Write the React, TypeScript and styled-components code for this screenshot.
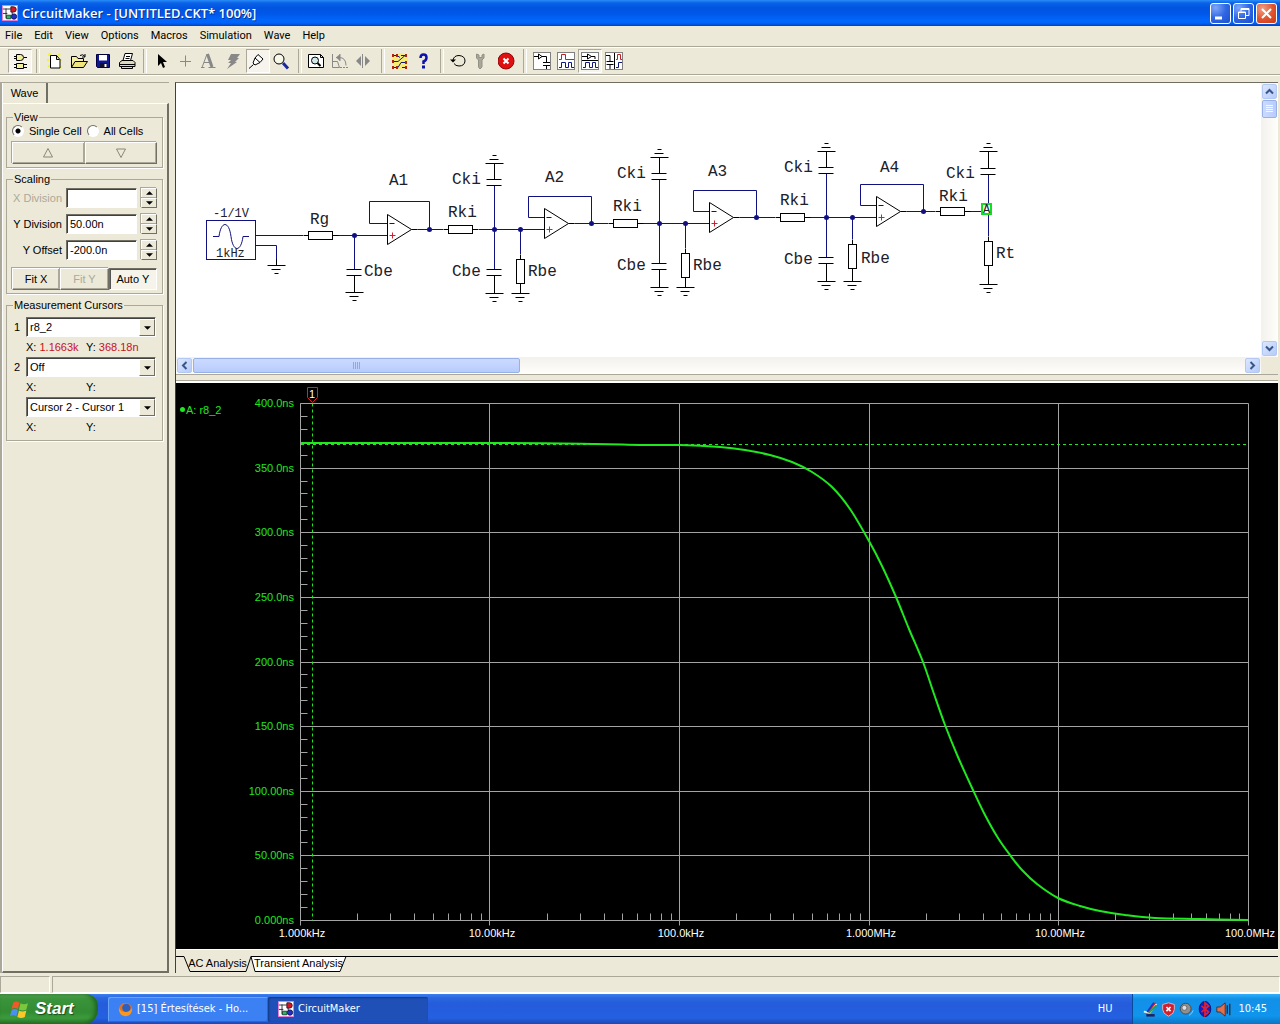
import React, { useState } from "react";
import styled, { createGlobalStyle, css } from "styled-components";

const face = "#ece9d8";
const shade = "#aca899";
const dark = "#716f64";
const ui = `"Liberation Sans", Arial, sans-serif`;
const tahoma = `"DejaVu Sans Condensed", "DejaVu Sans", Tahoma, sans-serif`;
const mono = `"Liberation Mono", "Courier New", monospace`;

const GlobalStyle = createGlobalStyle`
  * { box-sizing: border-box; }
  body { margin: 0; background: ${face}; font: 11px/12px ${ui}; color: #000; }
  button, input, select { font: inherit; color: inherit; margin: 0; padding: 0; }
`;

const Desktop = styled.div`
  display: flex;
  flex-direction: column;
  height: 100vh;
  min-height: 700px;
  overflow: hidden;
`;

/* ---------- title bar ---------- */

const TitleBar = styled.header`
  display: flex;
  align-items: center;
  gap: 4px;
  height: 26px;
  flex: none;
  padding: 0 3px 0 2px;
  background: linear-gradient(#2a8cf8 0, #0a62e8 3px, #0054e0 8px, #0058ea 14px, #0066fc 20px, #0064f8 23px, #0040c4 26px);
`;

const Title = styled.h1`
  flex: 1;
  margin: 0;
  font: 600 13px/18px "Open Sans", "Noto Sans", sans-serif;
  color: #fff;
  text-shadow: 1px 1px 0 #0a2f90;
  white-space: nowrap;
`;

const WindowButtons = styled.div`
  display: flex;
  gap: 2px;
`;

const WindowButton = styled.button<{ $close?: boolean }>`
  width: 21px;
  height: 21px;
  border: 1px solid #fff;
  border-radius: 3px;
  background: ${(p) =>
    p.$close
      ? "radial-gradient(circle at 30% 25%, #f0a088, #e0512c 55%, #c83c14)"
      : "radial-gradient(circle at 25% 20%, #7fa8f8, #2f66e4 50%, #1c50cc)"};
  svg { display: block; }
`;

/* ---------- menu and toolbar ---------- */

const MenuBar = styled.nav`
  display: flex;
  gap: 12px;
  flex: none;
  height: 22px;
  padding: 0 5px;
  border-bottom: 1px solid #fff;
  box-shadow: inset 0 -1px ${shade};
`;

const MenuItem = styled.button`
  height: 20px;
  border: 0;
  background: none;
  font: 11px/18px Roboto, ${tahoma};
`;

const Toolbar = styled.div`
  display: flex;
  align-items: center;
  flex: none;
  height: 28px;
  padding: 0 8px 2px;
  border-bottom: 1px solid #fff;
  box-shadow: inset 0 -1px ${shade};
`;

const Separator = styled.span`
  display: flex;
  justify-content: center;
  width: 11px;
  height: 24px;
  &::before {
    content: "";
    width: 2px;
    border-left: 1px solid ${shade};
    border-right: 1px solid #fff;
  }
`;

const ToolButton = styled.button<{ $on?: boolean }>`
  display: flex;
  align-items: center;
  justify-content: center;
  width: 24px;
  height: 24px;
  border: 1px solid transparent;
  background: none;
  ${(p) =>
    p.$on &&
    css`
      border-color: ${shade} #fff #fff ${shade};
      background: #f6f4ec;
    `}
`;

/* ---------- workspace ---------- */

const Workspace = styled.main`
  display: flex;
  flex: 1;
  min-height: 0;
  gap: 6px;
  padding: 6px 2px 3px 0;
`;

const SidePanel = styled.aside`
  display: flex;
  flex-direction: column;
  flex: none;
  width: 169px;
  border-top: 1px solid ${shade};
  border-left: 2px solid ${shade};
`;

const SideTab = styled.button`
  align-self: flex-start;
  width: 46px;
  height: 20px;
  border: 0;
  border-left: 1px solid #fff;
  border-right: 2px solid ${dark};
  background: ${face};
  font-family: ${ui};
`;

const SideBody = styled.div`
  display: flex;
  flex-direction: column;
  gap: 5px;
  flex: 1;
  padding: 7px 4px 0 3px;
  border: 1px solid #fff;
  border-right: 2px solid ${dark};
  border-bottom: 2px solid ${dark};
`;

const Group = styled.fieldset`
  margin: 0;
  min-width: 0;
  padding: 0 5px 3px;
  border: 1px solid ${shade};
  box-shadow: 1px 1px #fff;
  legend { margin-left: 1px; padding: 0 1px; line-height: 12px; background: ${face}; }
`;

const RadioRow = styled.div`
  display: flex;
  align-items: center;
  gap: 5px;
  height: 16px;
  margin-bottom: 3px;
`;

const RadioLabel = styled.label`
  display: flex;
  align-items: center;
  gap: 5px;
  white-space: nowrap;
`;

const Radio = styled.input`
  appearance: none;
  width: 12px;
  height: 12px;
  border: 1px solid;
  border-color: ${dark} #fff #fff ${dark};
  border-radius: 50%;
  background: #fff;
  &:checked { background: radial-gradient(circle, #000 2px, #fff 3px); }
`;

const ButtonRow = styled.div`
  display: flex;
`;

const PushButton = styled.button<{ $down?: boolean }>`
  flex: 1;
  height: 22px;
  border: 1px solid;
  border-color: ${(p) => (p.$down ? `${dark} #fff #fff ${dark}` : `#fff ${dark} ${dark} #fff`)};
  background: ${(p) => (p.$down ? "#f5f3ea" : face)};
  box-shadow: ${(p) => (p.$down ? "inset 1px 1px #555" : `inset -1px -1px ${shade}, -1px -1px ${shade}`)};
  &:disabled { color: ${shade}; }
  svg { display: block; margin: 0 auto; }
`;

const ScalingRows = styled.div`
  display: grid;
  gap: 6px;
  padding: 3px 0 8px;
`;

const ScalingRow = styled.div<{ $off?: boolean }>`
  display: grid;
  grid-template-columns: 50px 71px 16px;
  column-gap: 4px;
  height: 20px;
  label {
    align-self: center;
    text-align: right;
    white-space: nowrap;
    color: ${(p) => (p.$off ? shade : "#000")};
  }
`;

const sunken = css`
  border: 1px solid;
  border-color: ${dark} #fff #fff ${dark};
  box-shadow: inset 1px 1px #404040;
  background: #fff;
`;

const TextBox = styled.input`
  ${sunken}
  min-width: 0;
  width: 100%;
  padding-left: 3px;
  border-radius: 0;
`;

const Spinner = styled.span`
  display: grid;
  grid-template-rows: 1fr 1fr;
`;

const SpinButton = styled.button`
  display: flex;
  align-items: center;
  justify-content: center;
  border: 1px solid;
  border-color: #fff ${dark} ${dark} #fff;
  box-shadow: -1px -1px ${shade};
  background: ${face};
`;

const CursorGrid = styled.div`
  display: grid;
  grid-template-columns: 12px 130px;
  grid-auto-rows: 20px;
  align-items: center;
  padding: 6px 0 0 2px;
`;

const SelectBox = styled.span`
  position: relative;
  display: block;
  grid-column: 2;
`;

const Select = styled.select`
  ${sunken}
  appearance: none;
  display: block;
  width: 100%;
  height: 20px;
  padding-left: 3px;
  border-radius: 0;
`;

const SelectArrow = styled.span`
  position: absolute;
  top: 2px;
  right: 1px;
  display: flex;
  align-items: center;
  justify-content: center;
  width: 16px;
  height: 17px;
  border: 1px solid;
  border-color: #fff ${dark} ${dark} #fff;
  background: ${face};
  pointer-events: none;
`;

const Readout = styled.div`
  grid-column: 2;
  display: grid;
  grid-template-columns: 60px 1fr;
  span { white-space: nowrap; }
  output { color: #c8101c; }
`;

const Documents = styled.section`
  display: flex;
  flex-direction: column;
  flex: 1;
  min-width: 0;
  border-top: 1px solid ${dark};
  border-left: 1px solid #404040;
`;

const SchematicPane = styled.div`
  display: grid;
  grid-template-columns: minmax(0, 1fr) 17px;
  grid-template-rows: 274px 17px;
  flex: none;
  border-bottom: 1px solid ${shade};
`;

const SheetView = styled.div`
  overflow: hidden;
  background: #fff;
  svg { display: block; }
`;

const ScrollTrack = styled.div<{ $row?: boolean }>`
  display: flex;
  flex-direction: ${(p) => (p.$row ? "row" : "column")};
  gap: 1px;
  padding: 1px;
  background: ${(p) => (p.$row ? "linear-gradient(#f3f1ec, #fefefb)" : "linear-gradient(90deg, #f3f1ec, #fefefb)")};
`;

const ScrollButton = styled.button`
  display: flex;
  align-items: center;
  justify-content: center;
  flex: none;
  width: 15px;
  height: 15px;
  border: 1px solid #b4c8f4;
  border-radius: 2px;
  background: linear-gradient(135deg, #dce7ff, #b6cbf8);
`;

const ScrollThumb = styled.span<{ $row?: boolean }>`
  display: flex;
  align-items: center;
  justify-content: center;
  flex: none;
  width: ${(p) => (p.$row ? "30.2%" : "15px")};
  height: ${(p) => (p.$row ? "15px" : "18px")};
  border: 1px solid #98b0e8;
  border-radius: 2px;
  background: ${(p) => (p.$row ? "linear-gradient(#cbdaff, #b8ccfb)" : "linear-gradient(90deg, #cbdaff, #b8ccfb)")};
`;

const ScrollGap = styled.span`
  flex: 1;
`;

const Splitter = styled.div`
  flex: none;
  height: 8px;
  border-bottom: 2px solid #fff;
  box-shadow: inset 0 -1px ${shade};
`;

const Graph = styled.svg`
  flex: 1 1 0;
  min-height: 0;
  width: 100%;
  background: #000;
`;

const SheetTabs = styled.div`
  display: flex;
  flex: none;
  height: 24px;
  padding-top: 6px;
  border-top: 1px solid #fff;
  &::before { content: ""; width: 8px; border-top: 1px solid #000; }
  &::after { content: ""; flex: 1; border-top: 1px solid #000; }
`;

const SheetTab = styled.button<{ $w: number }>`
  position: relative;
  width: ${(p) => p.$w}px;
  height: 16px;
  padding-bottom: 2px;
  border: 0;
  background: none;
  white-space: nowrap;
  svg { position: absolute; left: 0; top: 0; width: 100%; height: 100%; overflow: visible; }
  span { position: relative; }
`;

const StatusBar = styled.footer`
  display: grid;
  grid-template-columns: 50px 1fr;
  gap: 2px;
  flex: none;
  height: 18px;
  border-bottom: 1px solid #fff;
`;

const StatusCell = styled.span`
  border: 1px solid;
  border-color: ${shade} #fff #fff ${shade};
`;

/* ---------- taskbar ---------- */

const Taskbar = styled.div`
  display: flex;
  flex: none;
  height: 30px;
  background: linear-gradient(#3a80f0 0, #2a66de 4px, #245cdc 10px, #2460e0 24px, #1c48b4 30px);
  color: #fff;
  font: 11px/14px ${tahoma};
`;

const StartButton = styled.button`
  display: flex;
  align-items: center;
  gap: 6px;
  width: 98px;
  margin-right: 10px;
  padding: 0 0 0 10px;
  border: 0;
  border-radius: 0 12px 14px 0;
  background: linear-gradient(#5aa85a 0, #3a943a 5px, #338c33 18px, #3b9b3b 24px, #2a722a 30px);
  box-shadow: inset -3px 0 4px #1f641f;
  font: italic bold 17px/24px "Liberation Sans", Arial, sans-serif;
  color: #fff;
  text-shadow: 1px 1px 1px #1a4a1a;
`;

const TaskButton = styled.button<{ $active?: boolean }>`
  display: flex;
  align-items: center;
  gap: 4px;
  width: 160px;
  height: 25px;
  align-self: center;
  padding: 0 10px;
  border: 0;
  border-radius: 2px;
  background: ${(p) => (p.$active ? "#1e50b8" : "#3c81f3")};
  box-shadow: ${(p) => (p.$active ? "inset 1px 1px 2px #123880" : "inset 1px 1px #6aa4f8, inset -1px -1px #2a66d0")};
  white-space: nowrap;
`;

const Language = styled.span`
  margin: auto 20px auto auto;
`;

const Tray = styled.div`
  display: flex;
  align-items: center;
  gap: 3px;
  padding: 0 13px 0 10px;
  border-left: 1px solid #0a4a9c;
  background: linear-gradient(#2fb0f8 0, #1290e8 5px, #1094ec 22px, #0c74c4 30px);
  time { margin-left: 4px; }
`;

/* ---------- icons ---------- */

const Icon = ({ children, size = 18 }: { children: React.ReactNode; size?: number }) => (
  <svg width={size} height={size} viewBox="0 0 18 18" fill="none" stroke="#000" aria-hidden="true">
    {children}
  </svg>
);

const AppIcon = () => (
  <Icon size={16}>
    <rect x="0" y="0" width="18" height="18" fill="#fff" stroke="none" />
    <rect x="0.5" y="0.5" width="17" height="17" stroke="#e070d0" />
    <path d="M1 4.5H11M4.5 4V15M1 9.5H6M11.5 8V12" stroke="#223" />
    <path d="M10 2h3a3 3 0 0 1 0 6h-3z" fill="#d01828" stroke="#401020" />
    <path d="M5 11.5h5v4H5z" fill="#30b860" stroke="#104030" />
    <circle cx="13.5" cy="13" r="3" fill="#2030c8" stroke="#101050" />
  </Icon>
);

const wavePair = "M2 15.5H4.5V10.5H8.5V15.5H11.5V10.5H14.5V15.5H17";
const Frame = () => <rect x="0.5" y="0.5" width="17" height="17" fill="#fff" stroke="#808080" />;

const icons: Record<string, React.ReactNode> = {
  parts: (
    <g fill="#f4f09a">
      <path d="M5.5 2.5h4q3 0 3 3t-3 3h-4zM3 4.5h2M3 6.5h2M13 5.5h3" />
      <path d="M5.5 11.5h7v5h-7zM3 12.5h2M3 15.500h2M13 12.500h3M13 15.500h3" />
    </g>
  ),
  newFile: (
    <>
      <path d="M2 3h2M3 1l2 2M1 8h2M2 15l2-2M14 2l-2 2M14 8h2M13 14l2 2" stroke="#f4f040" strokeWidth="2" />
      <path d="M4.500 3.500h6l3.500 4v8.500h-9.500zM10.500 3.500v4h3" fill="#fff" />
    </>
  ),
  open: (
    <>
      <path d="M1.500 15.500v-11h5l1.500 2h5.500v3" fill="#f6f0a0" />
      <path d="M1.500 15.500 5 9.500h12.500l-4 6z" fill="#f0e680" />
      <path d="M10 3.500q3-2 5 1M15 2v3h-3" />
    </>
  ),
  save: (
    <>
      <path d="M2.500 2.500h13v13h-12l-1-1z" fill="#101890" stroke="#000040" />
      <path d="M5 3h8v5.500H5z" fill="#fff" stroke="none" />
      <path d="M6 11h7v4.500H6z" fill="#101030" stroke="none" />
      <path d="M10.500 12h2v3h-2z" fill="#fff" stroke="none" />
    </>
  ),
  print: (
    <>
      <path d="M5 8.500 7 1.500h7.500l-2 7" fill="#fff" />
      <path d="M8 4.500h4M7.500 6.500h4" />
      <path d="M1.500 10.500 4 8.500h11l2 2v4H1.500zM1.500 12.500H17M3.500 14.500v2h11v-2" fill="#ddd8c0" />
    </>
  ),
  arrow: <path d="M5 2v12l3-3 2 5 2-1-2-5h4z" fill="#000" stroke="none" />,
  plus: <path d="M8.500 3.500v11M3 9.500h11" stroke="#888" />,
  text: (
    <g transform="translate(-3 0)">
      <path d="M9 2 4 15.500M6 10.500h6" stroke="#888" />
      <path d="M9.500 2 14 15" stroke="#888" strokeWidth="3" />
      <path d="M1.500 15.500h5M10.500 15.500h7" stroke="#888" />
    </g>
  ),
  bolt: <path d="M6 2h9l-3 4h2l-4 4h2L2 17l4-6H3l3-3H3z" fill="#888" stroke="none" />,
  probe: (
    <path d="M0 16.500 4.500 12.500M9 2.500l5 4.500-3 3.500-5 2.500-2-2L6 6zM6 6l5 4.500" fill="#fff" />
  ),
  zoom: (
    <>
      <circle cx="6" cy="7" r="5" fill="#f8f8e8" />
      <path d="m10 11 5 5.500" stroke="#1828a0" strokeWidth="3" />
    </>
  ),
  fit: (
    <>
      <path d="M.5 2.500h12l3 3v10H.5zM12.500 2.500v3h3" fill="#fff" />
      <circle cx="7" cy="8.500" r="3.500" fill="#d0e8e8" />
      <path d="m9.500 11 3 3" strokeWidth="2" />
    </>
  ),
  rotate: (
    <g stroke="#888">
      <path d="M.5 2v13.500h7M.5 9.500h5l2 6" />
      <path d="M4 5.500h3q7 0 7 8M8 2v7" />
      <path d="M4 5.500 8 2v7z" fill="#888" stroke="none" />
      <path d="M8 15.500h8" strokeDasharray="2 1" />
    </g>
  ),
  mirror: (
    <g stroke="#888">
      <path d="M6.500 2v14" />
      <path d="M5 4v10L0 9z" fill="#888" stroke="none" />
      <path d="M9 4v10l5-5z" fill="#888" stroke="none" />
    </g>
  ),
  sweep: (
    <>
      <circle cx="9" cy="9" r="8" fill="#f8ec70" stroke="none" />
      <path d="M1 3.500h5l3 2M10 3.500h6M1 9.500h6l7-6M3 15.500h4l3-5h6M11 15.500h5" stroke="#101880" />
      <path d="M2 2v3M2 8v3M2 14v3M15 2v3M15 9v3M15 14v3M6 2v3M6 14v3" stroke="#b02010" strokeWidth="2" />
    </>
  ),
  help: (
    <>
      <path d="M5.500 6q0-3.500 3-3.500t3 3-3 4V12" stroke="#1010b0" strokeWidth="2.500" />
      <path d="M7 13.500h3v3H7z" fill="#1010b0" stroke="none" />
    </>
  ),
  reset: (
    <>
      <path d="M3 8q1-4.500 6-4.500 6 .5 6 5.500-.5 5-6 5-3.500 0-5-2.500" />
      <path d="M0 7.500h6L3 10.500z" fill="#000" stroke="none" />
    </>
  ),
  wrench: (
    <path d="M2.500 2v4l2 2v7l1.500 2 2-2V8l2-2V2L8 3v2.500H5V3z" fill="#aaa79a" stroke="#928f84" />
  ),
  stop: (
    <>
      <circle cx="8" cy="9" r="8" fill="#e01010" stroke="#900808" />
      <path d="m5.500 6.500 5 5M10.500 6.500l-5 5" stroke="#fff" strokeWidth="2" />
    </>
  ),
  circuit: (
    <>
      <Frame />
      <path d="M1 4.500h4M9 4.500h4.500V10M5.500 2v5L9 4.500zM10 10.500h7M10 13.500h7M13.500 14v3" />
    </>
  ),
  waves: (
    <>
      <Frame />
      <path d="M2 7.500h2.500v-5h4v5H17" stroke="#c02020" />
      <path d={wavePair} stroke="#101880" />
    </>
  ),
  splitH: (
    <>
      <Frame />
      <path d="M1 4.500h5M10 4.500h4V7M6.500 2v5l4-2.500zM1 8.500h16" />
      <path d={wavePair} stroke="#101880" />
    </>
  ),
  splitV: (
    <>
      <Frame />
      <path d="M1 3.500h4V9M1.500 9.500h7M1.500 12.500h7M5 13v4M9.500 1v16" />
      <path d="M11 7.500h1.500v-5h3v5H17" stroke="#c02020" />
      <path d="M11 15.500h2.500v-5H17" stroke="#101880" />
    </>
  ),
};

const toolGroups: [string, string, boolean?][][] = [
  [["parts", "Browse parts", true]],
  [["newFile", "New"], ["open", "Open"], ["save", "Save"], ["print", "Print"]],
  [["arrow", "Select"], ["plus", "Wire"], ["text", "Text"], ["bolt", "Delete"], ["probe", "Probe", true], ["zoom", "Zoom"]],
  [["fit", "Fit to window"], ["rotate", "Rotate"], ["mirror", "Mirror"]],
  [["sweep", "Digital mode"], ["help", "Help"]],
  [["reset", "Reset"], ["wrench", "Setup"], ["stop", "Stop"]],
  [["circuit", "Circuit"], ["waves", "Waveforms"], ["splitH", "Split horizontally", true], ["splitV", "Split vertically"]],
];

const Triangle = ({ down, w = 7 }: { down?: boolean; w?: number }) => (
  <svg width={w} height="4" viewBox="0 0 8 4" aria-hidden="true">
    <path d={down ? "M0 0h8L4 4z" : "M0 4h8L4 0z"} />
  </svg>
);

const HollowTriangle = ({ down }: { down?: boolean }) => (
  <svg width="12" height="10" fill="none" stroke="#8a877a" aria-hidden="true">
    <path d={down ? "M1.500 1h9L6 9.500z" : "M1.500 9h9L6 .5z"} />
  </svg>
);

const Chevron = ({ turn }: { turn: number }) => (
  <svg width="9" height="9" viewBox="-4.500 -4.500 9 9" aria-hidden="true">
    <path d="M-3.500 2 0-1.500 3.500 2" transform={`rotate(${turn})`} fill="none" stroke="#3a5688" strokeWidth="2" />
  </svg>
);

/* ---------- schematic ---------- */

const blue = "#101080";

const Ground = ({ x, y, up }: { x: number; y: number; up?: boolean }) => {
  const s = up ? -4 : 4;
  return <path d={`M${x - 9} ${y}h18M${x - 5} ${y + s}h9M${x - 2} ${y + 2 * s}h4`} />;
};

const Dot = ({ x, y }: { x: number; y: number }) => <circle cx={x} cy={y} r="2.500" fill={blue} stroke="none" />;

const Wire = ({ d }: { d: string }) => <path d={d} stroke={blue} />;

const ResistorH = ({ x, y }: { x: number; y: number }) => (
  <>
    <path d={`M${x - 5} ${y}h5M${x + 24} ${y}h6`} />
    <rect x={x} y={y - 4} width="24" height="8" fill="#fff" />
  </>
);

const ResistorV = ({ x, y, end }: { x: number; y: number; end: number }) => (
  <>
    <path d={`M${x} ${y - 5}V${end}`} />
    <rect x={x - 4} y={y} width="8" height="24" fill="#fff" />
    <Ground x={x} y={end} />
  </>
);

const Capacitor = ({ x, from, y, end }: { x: number; from: number; y: number; end: number }) => {
  const up = end < y;
  const near = up ? y + 6 : y;
  const far = up ? y : y + 6;
  return (
    <>
      <Wire d={`M${x} ${from}V${near}`} />
      <path d={`M${x - 8} ${y}h15M${x - 8} ${y + 6}h15M${x} ${far}V${end}`} />
      <Ground x={x} y={end} up={up} />
    </>
  );
};

const Label = styled.text<{ $small?: boolean }>`
  font: ${(p) => (p.$small ? 12 : 16)}px ${mono};
  fill: #202028;
  stroke: none;
`;

const OpAmp = ({ x, y, out, top, back }: { x: number; y: number; out: number; top: number; back: number }) => (
  <>
    <Wire d={`M${x} ${y - 6}H${back}V${top}H${out}V${y}`} />
    <path d={`M${x} ${y - 15}v30l24 -15zM${x + 24} ${y}h6`} fill="#fff" />
    <path d={`M${x + 2} ${y - 6}h5`} stroke={blue} />
    <path d={`M${x + 2} ${y + 6}h6m-3 -3v6`} stroke="#d02030" />
    <Wire d={`M${x + 30} ${y}H${out}`} />
    <Dot x={out} y={y} />
  </>
);

const labels: [string, number, number][] = [
  ["Rg", 310, 224], ["Cbe", 364, 276], ["A1", 389, 185],
  ["Rki", 448, 217], ["Cki", 452, 184], ["Cbe", 452, 276], ["Rbe", 528, 276], ["A2", 545, 182],
  ["Rki", 613, 211], ["Cki", 617, 178], ["Cbe", 617, 270], ["Rbe", 693, 270], ["A3", 708, 176],
  ["Rki", 780, 205], ["Cki", 784, 172], ["Cbe", 784, 264], ["Rbe", 861, 263], ["A4", 880, 172],
  ["Rki", 939, 201], ["Cki", 946, 178], ["Rt", 996, 258],
];

const Schematic = () => (
  <svg width="1084" height="274" viewBox="176 83 1084 274" fill="none" stroke="#000" role="img" aria-label="Circuit">
    <rect x="206.500" y="220.500" width="49" height="39" stroke={blue} />
    <path d="M213 236.500h6c2-16 10-16 12 0s10 16 12 0h6" stroke={blue} />
    <Label $small x="213" y="217">-1/1V</Label>
    <Label $small x="216" y="257">1kHz</Label>
    <Wire d="M256 235.500H303M338 235.500H387M256 245.500H276.500V259" />
    <path d="M276.500 259v6" />
    <Ground x={276.5} y={265.5} />
    <ResistorH x={308.5} y={235.5} />
    <Capacitor x={354.5} from={235.5} y={269.5} end={292.5} />
    <Dot x={354.5} y={235.5} />

    <OpAmp x={387.5} y={229.5} out={429.5} top={201.5} back={369.5} />
    <Wire d="M429 229.500H443M479 229.500H544M520.500 229V254" />
    <ResistorH x={448.5} y={229.5} />
    <Capacitor x={494.5} from={229.5} y={179.5} end={163.5} />
    <Capacitor x={494.5} from={229.5} y={269.5} end={293.5} />
    <ResistorV x={520.5} y={259.5} end={293.5} />
    <Dot x={494.5} y={229.5} />
    <Dot x={520.5} y={229.5} />

    <OpAmp x={544.5} y={223.5} out={591.5} top={196.5} back={528.5} />
    <Wire d="M591 223.500H608M643 223.500H709M685.500 223V248" />
    <ResistorH x={613.5} y={223.5} />
    <Capacitor x={659.5} from={223.5} y={173.5} end={157.5} />
    <Capacitor x={659.5} from={223.5} y={263.5} end={287.5} />
    <ResistorV x={685.5} y={253.5} end={287.5} />
    <Dot x={659.5} y={223.5} />
    <Dot x={685.5} y={223.5} />

    <OpAmp x={709.5} y={217.5} out={756.5} top={190.5} back={693.5} />
    <Wire d="M756 217.500H775M810 217.500H876M852.500 217V239" />
    <ResistorH x={780.5} y={217.5} />
    <Capacitor x={826.5} from={217.5} y={167.5} end={151.5} />
    <Capacitor x={826.5} from={217.5} y={257.5} end={281.5} />
    <ResistorV x={852.5} y={244.5} end={281.5} />
    <Dot x={826.5} y={217.5} />
    <Dot x={852.5} y={217.5} />

    <OpAmp x={876.5} y={211.5} out={923.5} top={184.5} back={860.5} />
    <Wire d="M923 211.500H935M970 211.500H988M988.500 203V236" />
    <ResistorH x={940.5} y={211.5} />
    <Capacitor x={988.5} from={211.5} y={168.5} end={151.5} />
    <ResistorV x={988.5} y={241.5} end={284.5} />
    <rect x="982" y="204" width="9" height="10" fill="#fff" stroke="#10e020" strokeWidth="2" />
    <Label $small x="983" y="213">A</Label>

    {labels.map(([text, x, y]) => (
      <Label key={`${x}-${y}`} x={x} y={y}>{text}</Label>
    ))}
  </svg>
);

/* ---------- bode plot ---------- */

const plot = { left: 300.5, right: 1248.5, top: 403.5, bottom: 920.5 };
const decade = (plot.right - plot.left) / 5;
const division = (plot.bottom - plot.top) / 8;
const yLabels = ["400.0ns", "350.0ns", "300.0ns", "250.0ns", "200.0ns", "150.0ns", "100.00ns", "50.00ns", "0.000ns"];
const xLabels = ["1.000kHz", "10.00kHz", "100.0kHz", "1.000MHz", "10.00MHz", "100.0MHz"];

const samples: [number, number][] = [
  [301, 443], [500, 443], [595, 444], [640, 445], [680, 445], [720, 447], [745, 450], [770, 455], [792, 462], [812, 472],
  [832, 487], [850, 509], [869, 541], [882, 566], [896, 597], [909, 629], [923, 662], [934, 694], [945, 725], [958, 757], [973, 790],
  [985, 815], [998, 838], [1010, 855], [1022, 870], [1037, 884], [1058, 898], [1080, 906], [1100, 911],
  [1125, 915], [1155, 918], [1200, 919], [1248, 920],
];

// Catmull-Rom segments through the samples
const trace = samples.slice(1).reduce((d, p2, i) => {
  const p0 = samples[Math.max(i - 1, 0)];
  const p1 = samples[i];
  const p3 = samples[Math.min(i + 2, samples.length - 1)];
  const c = [p1[0] + (p2[0] - p0[0]) / 6, p1[1] + (p2[1] - p0[1]) / 6, p2[0] - (p3[0] - p1[0]) / 6, p2[1] - (p3[1] - p1[1]) / 6];
  return `${d}C${c.join(" ")} ${p2.join(" ")}`;
}, `M${samples[0].join(" ")}`);

const gridPath = [
  ...yLabels.map((_, i) => `M${plot.left} ${Math.round(plot.top + i * division - 0.5) + 0.5}H${plot.right}`),
  ...xLabels.map((_, i) => `M${Math.round(plot.left + i * decade - 0.7) + 0.5} ${plot.top}V${plot.bottom + 5}`),
].join("");

const tickPath = [
  ...Array.from({ length: 40 }, (_, i) => `M${plot.left} ${Math.round(plot.top + (i * division) / 5 - 0.5) + 0.5}h7`),
  ...Array.from({ length: 5 }, (_, d) =>
    [2, 3, 4, 5, 6, 7, 8, 9].map((n) => `M${Math.round(plot.left + (d + Math.log10(n)) * decade - 0.5) + 0.5} ${plot.bottom}v-7`)
  ).flat(),
].join("");

const GraphText = styled.text<{ $color: string }>`
  font: 11px ${ui};
  fill: ${(p) => p.$color};
`;

const green = "#1fe81f";

const BodePlot = () => (
  <Graph viewBox="176 383 1102 566" role="img" aria-label="AC analysis">
    <path d={gridPath} stroke="#a4a4a4" />
    <path d={tickPath} stroke="#a4a4a4" />
    <path d={`M312.500 ${plot.top}V${plot.bottom}M301 444.500H${plot.right}`} stroke={green} strokeDasharray="3 3" />
    <path d={trace} fill="none" stroke={green} strokeWidth="2" />
    <path d="M307.500 387.500h10v10l-5 5-5-5z" fill="#000" stroke="#e02020" />
    <GraphText $color="#fff" x="312" y="398" textAnchor="middle">1</GraphText>
    <circle cx="182.500" cy="409.500" r="2.500" fill={green} />
    <GraphText $color={green} x="186" y="414">A: r8_2</GraphText>
    {yLabels.map((t, i) => (
      <GraphText key={t} $color={green} x="294" y={Math.round(407 + i * division)} textAnchor="end">{t}</GraphText>
    ))}
    {xLabels.map((t, i) => (
      <GraphText key={t} $color="#fff" x={Math.round(302 + i * decade)} y="937" textAnchor="middle">{t}</GraphText>
    ))}
  </Graph>
);

/* ---------- side panel parts ---------- */

const Scale = ({ id, label, value, off }: { id: string; label: string; value: string; off?: boolean }) => (
  <ScalingRow $off={off}>
    <label htmlFor={id}>{label}</label>
    <TextBox id={id} defaultValue={value} />
    <Spinner>
      <SpinButton aria-label={`Increase ${label}`}><Triangle /></SpinButton>
      <SpinButton aria-label={`Decrease ${label}`}><Triangle down /></SpinButton>
    </Spinner>
  </ScalingRow>
);

const Chooser = ({ id, value, name }: { id: string; value: string; name?: string }) => (
  <SelectBox>
    <Select id={id} aria-label={name} defaultValue={value}>
      <option>{value}</option>
    </Select>
    <SelectArrow><Triangle down /></SelectArrow>
  </SelectBox>
);

const Values = ({ x, y }: { x?: string; y?: string }) => (
  <Readout>
    <span>X: <output>{x}</output></span>
    <span>Y: <output>{y}</output></span>
  </Readout>
);

const Controls = () => {
  const [cell, setCell] = useState("Single Cell");
  return (
    <SidePanel>
      <SideTab>Wave</SideTab>
      <SideBody>
        <Group>
          <legend>View</legend>
          <RadioRow>
            {["Single Cell", "All Cells"].map((name) => (
              <RadioLabel key={name}>
                <Radio type="radio" name="cells" checked={cell === name} onChange={() => setCell(name)} />
                {name}
              </RadioLabel>
            ))}
          </RadioRow>
          <ButtonRow>
            <PushButton aria-label="Previous cell"><HollowTriangle /></PushButton>
            <PushButton aria-label="Next cell"><HollowTriangle down /></PushButton>
          </ButtonRow>
        </Group>
        <Group>
          <legend>Scaling</legend>
          <ScalingRows>
            <Scale id="x-div" label="X Division" value="" off />
            <Scale id="y-div" label="Y Division" value="50.00n" />
            <Scale id="y-off" label="Y Offset" value="-200.0n" />
          </ScalingRows>
          <ButtonRow>
            <PushButton>Fit X</PushButton>
            <PushButton disabled>Fit Y</PushButton>
            <PushButton $down>Auto Y</PushButton>
          </ButtonRow>
        </Group>
        <Group>
          <legend>Measurement Cursors</legend>
          <CursorGrid>
            <label htmlFor="cursor-1">1</label>
            <Chooser id="cursor-1" value="r8_2" />
            <Values x="1.1663k" y="368.18n" />
            <label htmlFor="cursor-2">2</label>
            <Chooser id="cursor-2" value="Off" />
            <Values />
            <Chooser id="difference" name="Difference" value="Cursor 2 - Cursor 1" />
            <Values />
          </CursorGrid>
        </Group>
      </SideBody>
    </SidePanel>
  );
};

const menus = ["File", "Edit", "View", "Options", "Macros", "Simulation", "Wave", "Help"];

export default function App() {
  return (
    <Desktop>
      <GlobalStyle />
      <TitleBar>
        <AppIcon />
        <Title>CircuitMaker - [UNTITLED.CKT* 100%]</Title>
        <WindowButtons>
          <WindowButton aria-label="Minimize">
            <svg width="19" height="19"><path d="M4 14h7" stroke="#fff" strokeWidth="3" /></svg>
          </WindowButton>
          <WindowButton aria-label="Restore">
            <svg width="19" height="19" fill="none" stroke="#fff"><path d="M7 7.500V4.500h8v7h-3M4.500 8v6.500h7V8zM4 8.500h8M7 5.500h8" /></svg>
          </WindowButton>
          <WindowButton $close aria-label="Close">
            <svg width="19" height="19"><path d="m5 5 9 9M14 5l-9 9" stroke="#fff" strokeWidth="2" /></svg>
          </WindowButton>
        </WindowButtons>
      </TitleBar>

      <MenuBar>
        {menus.map((m) => <MenuItem key={m}>{m}</MenuItem>)}
      </MenuBar>

      <Toolbar>
        {toolGroups.map((group, i) => (
          <React.Fragment key={group[0][0]}>
            {i > 0 && <Separator />}
            {group.map(([icon, name, on]) => (
              <ToolButton key={icon} aria-label={name} $on={on}><Icon>{icons[icon]}</Icon></ToolButton>
            ))}
          </React.Fragment>
        ))}
      </Toolbar>

      <Workspace>
        <Controls />
        <Documents>
          <SchematicPane>
            <SheetView><Schematic /></SheetView>
            <ScrollTrack>
              <ScrollButton aria-label="Scroll up"><Chevron turn={0} /></ScrollButton>
              <ScrollThumb>
                <svg width="7" height="8" stroke="#f4f8ff"><path d="M0 .5h7M0 2.500h7M0 4.500h7M0 6.500h7" /></svg>
              </ScrollThumb>
              <ScrollGap />
              <ScrollButton aria-label="Scroll down"><Chevron turn={180} /></ScrollButton>
            </ScrollTrack>
            <ScrollTrack $row>
              <ScrollButton aria-label="Scroll left"><Chevron turn={270} /></ScrollButton>
              <ScrollThumb $row>
                <svg width="8" height="7" stroke="#8ca8e8"><path d="M.5 0v7M2.500 0v7M4.500 0v7M6.500 0v7" /></svg>
              </ScrollThumb>
              <ScrollGap />
              <ScrollButton aria-label="Scroll right"><Chevron turn={90} /></ScrollButton>
            </ScrollTrack>
          </SchematicPane>
          <Splitter />
          <BodePlot />
          <SheetTabs>
            <SheetTab $w={67}>
              <svg viewBox="0 0 67 16" preserveAspectRatio="none" fill={face} stroke="#000"><path d="M0 .5 6 15.500H62L67 .5" /></svg>
              <span>AC Analysis</span>
            </SheetTab>
            <SheetTab $w={95}>
              <svg viewBox="0 0 95 16" preserveAspectRatio="none" fill="#fff" stroke="#000"><path d="M0 .5 4 15.500H89L95 .5z" /></svg>
              <span>Transient Analysis</span>
            </SheetTab>
          </SheetTabs>
        </Documents>
      </Workspace>

      <StatusBar>
        <StatusCell />
        <StatusCell />
      </StatusBar>

      <Taskbar>
        <StartButton>
          <Icon size={19}>
            <g stroke="none">
              <path d="M3 2.500q3-2 6 0L7.500 8.500q-3-2-6 0z" fill="#f05a28" />
              <path d="M10 3q3 2 7 0l-1.500 6q-3.500 2-7 0z" fill="#7cc83c" />
              <path d="M1.500 9.500q3-2 6 0L6 15.500q-3-2-6 0z" fill="#4a90f0" />
              <path d="M8.500 10q3 2 7 0L14 16q-3.500 2-7 0z" fill="#fcc828" />
            </g>
          </Icon>
          Start
        </StartButton>
        <TaskButton>
          <Icon size={15}>
            <g stroke="none">
              <circle cx="9" cy="9" r="8" fill="#e8701c" />
              <circle cx="10" cy="7" r="5" fill="#2c60c0" />
              <path d="M1 7q2 5 8 5t8-5q0 10-8 10T1 7z" fill="#f89820" />
            </g>
          </Icon>
          [15] Értesítések - Ho...
        </TaskButton>
        <TaskButton $active>
          <AppIcon />
          CircuitMaker
        </TaskButton>
        <Language>HU</Language>
        <Tray>
          <Icon size={15}>
            <path d="M1 11.500 8 13 16 2" stroke="#f0f0f0" strokeWidth="2" />
            <path d="M6 12 15 1" stroke="#e02020" strokeWidth="2" />
            <path d="M7 13 16 4" stroke="#20a040" strokeWidth="2" />
            <path d="M5 12 13 1" stroke="#2030d0" strokeWidth="2" />
            <path d="M4 16h10" stroke="#202060" strokeWidth="3" />
          </Icon>
          <Icon size={15}>
            <path d="M9 1 2 3v6q0 5 7 8 7-3 7-8V3z" fill="#d02030" stroke="#f4c0c0" />
            <path d="m6.500 6 5 5M11.500 6l-5 5" stroke="#fff" strokeWidth="2" />
          </Icon>
          <Icon size={15}>
            <circle cx="8" cy="8" r="6.500" fill="#909090" stroke="#404040" />
            <circle cx="6.500" cy="7" r="3" fill="#e0e0e0" stroke="#606060" />
            <path d="M12 16q4-2 5-6" stroke="#a0d0ff" />
          </Icon>
          <Icon size={16}>
            <ellipse cx="9" cy="9" rx="6.500" ry="8.500" fill="#1020c8" stroke="#081070" />
            <path d="m5 5.500 8 7L9 16V2l4 3.500-8 7" stroke="#e02030" strokeWidth="2" />
          </Icon>
          <Icon size={15}>
            <path d="M1 6h4l6-5v16l-6-5H1z" fill="#e07050" stroke="#502010" />
            <path d="M13.500 4v10M16.500 2v14" stroke="#202020" strokeWidth="1.500" />
          </Icon>
          <time>10:45</time>
        </Tray>
      </Taskbar>
    </Desktop>
  );
}
